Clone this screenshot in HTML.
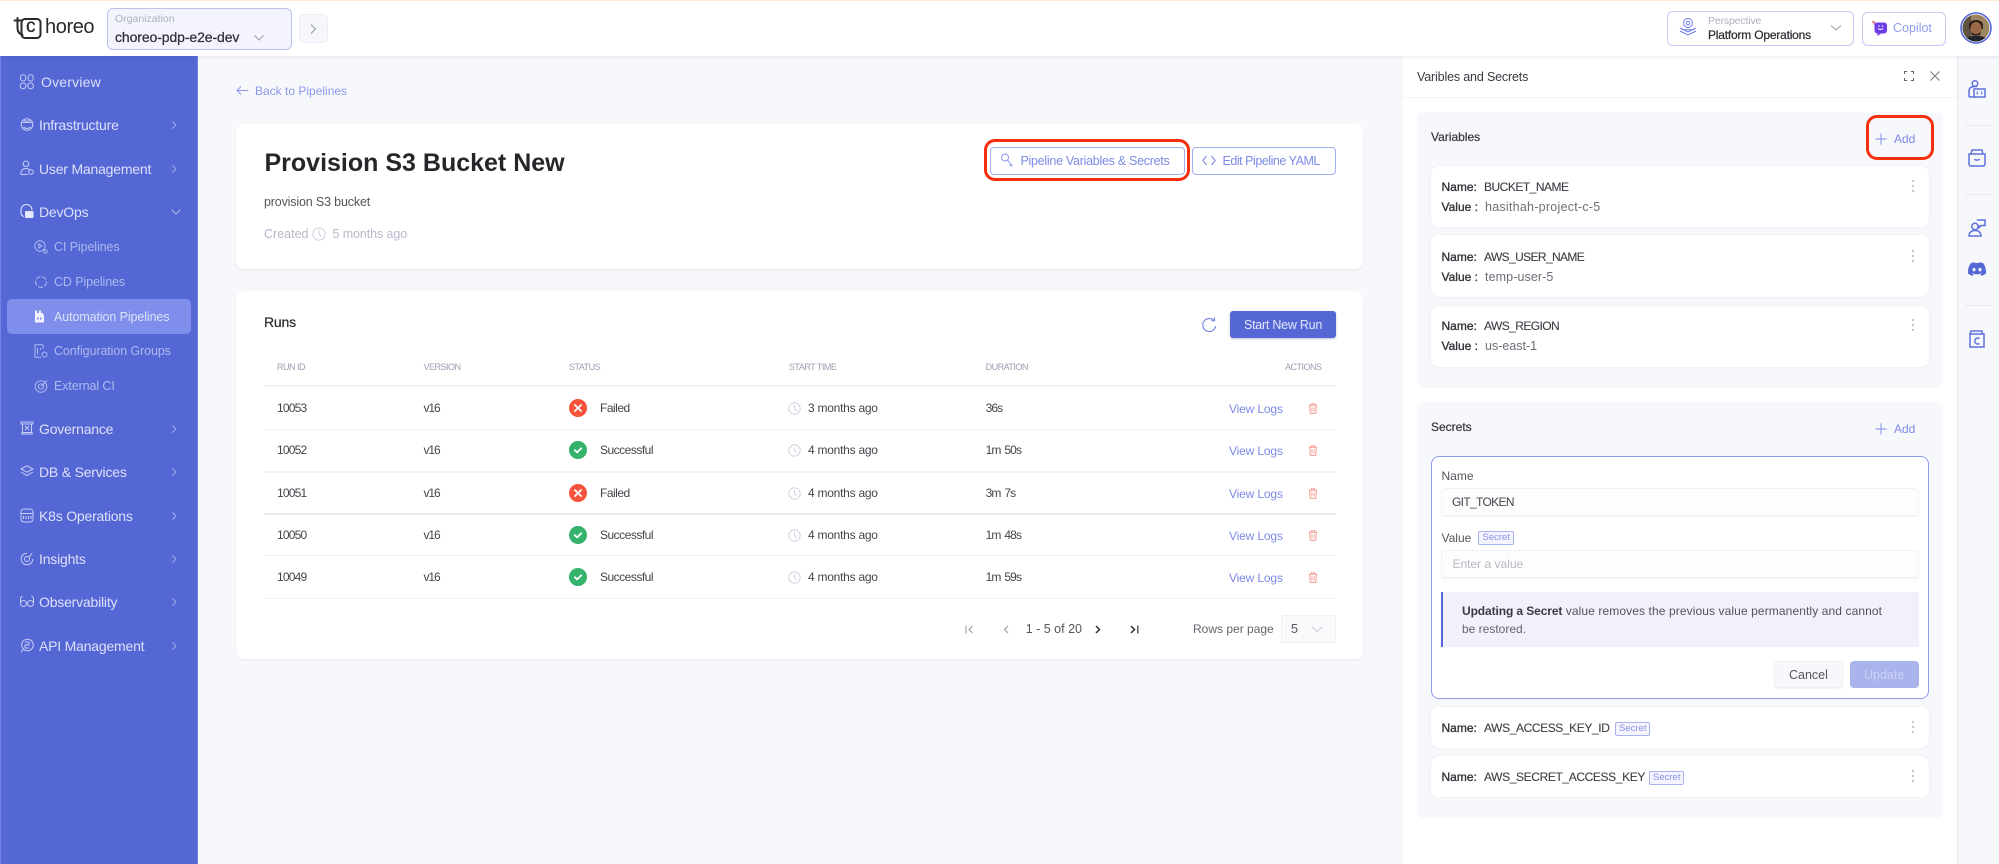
<!DOCTYPE html>
<html lang="en"><head><meta charset="utf-8"><title>Choreo - Provision S3 Bucket New</title>
<style>
html,body{margin:0;padding:0;width:1999px;height:864px;overflow:hidden;background:#F7F8FC}
body{font-family:"Liberation Sans",sans-serif;color:#3c3c44}
#app{position:relative;width:1999px;height:864px;overflow:hidden;filter:blur(.35px)}
.t{position:absolute;white-space:nowrap;line-height:20px;font-size:12px;color:#44444c}
.b{position:absolute;box-sizing:border-box}
svg.i{position:absolute;overflow:visible;fill:none;stroke:currentColor}
.m{-webkit-text-stroke:.25px currentColor}
.nav{font-size:14px;color:#DCE0F8;letter-spacing:-.2px;left:39px}
.sub{font-size:12.5px;color:#AEB8EE;letter-spacing:-.1px;left:54px}
.th{font-size:9px;color:#9B9EB2;letter-spacing:-.5px}
.id{left:277px;letter-spacing:-.8px}
.ver{left:423.5px;letter-spacing:-1.1px}
.st{left:600px;letter-spacing:-.5px}
.tm{left:808px;letter-spacing:-.25px}
.du{left:985.6px;letter-spacing:-.9px;word-spacing:1.5px}
.vl{left:1229px;letter-spacing:-.15px;color:#7C8AE6}
.card{background:#fff;border-radius:8px;box-shadow:0 1px 2px rgba(30,40,90,.07)}
.vc{background:#fff;border-radius:8px;left:1431px;width:498px;box-shadow:0 0 2px rgba(30,40,90,.07)}
.nm{left:1441.5px;color:#33333a;-webkit-text-stroke:.35px currentColor}
.nv{left:1484px;color:#3e3e46;-webkit-text-stroke:.12px currentColor}
.val{left:1485px;font-size:12.5px;color:#6e6e78}
.ln{position:absolute;left:264px;width:1072px;height:1px;background:#F0F1F5}
.chip{border:1px solid #A9B3F0;background:#F3F4FD;border-radius:2px;height:13.5px}
.chipt{font-size:9.5px;color:#8894E8}
.red{border:3px solid #F6300F;border-radius:11px}
</style></head><body>
<svg width="0" height="0" style="position:absolute">
<defs>
<symbol id="clock" viewBox="0 0 16 16"><circle cx="8" cy="8" r="7" fill="none" stroke="#C7C9D8" stroke-width="1"/><path d="M8 3.5V8l2.5 3" fill="none" stroke="#C7C9D8" stroke-width="1"/></symbol>
<symbol id="trash" viewBox="0 0 12 14"><path d="M1 3h10M4 3V1.3h4V3M2 3l.6 9.8h6.8L10 3M4.7 5.5v5M7.3 5.5v5" fill="none" stroke="#F28B80" stroke-width="1"/></symbol>
<symbol id="fail" viewBox="0 0 18 18"><circle cx="9" cy="9" r="9" fill="#F6533C"/><path d="M6 6l6 6M12 6l-6 6" stroke="#fff" stroke-width="1.8" stroke-linecap="round"/></symbol>
<symbol id="ok" viewBox="0 0 18 18"><circle cx="9" cy="9" r="9" fill="#35B26C"/><path d="M5.8 9.2l2.3 2.2 4.2-4.2" fill="none" stroke="#fff" stroke-width="1.8" stroke-linecap="round" stroke-linejoin="round"/></symbol>
<symbol id="cr" viewBox="0 0 10 12"><path d="M3 1.5L7.5 6 3 10.5" fill="none" stroke="#A3AEEC" stroke-width="1.2"/></symbol>
<symbol id="dots" viewBox="0 0 4 14"><circle cx="2" cy="2" r=".9" fill="#9c9ca6"/><circle cx="2" cy="7" r=".9" fill="#9c9ca6"/><circle cx="2" cy="12" r=".9" fill="#9c9ca6"/></symbol>
<symbol id="plus" viewBox="0 0 14 14"><path d="M7 .5v13M.5 7h13" fill="none" stroke="#7C8AE6" stroke-width="1.1"/></symbol>
</defs></svg>
<div id="app">

<!-- header -->
<div class="b" style="left:0;top:0;width:1999px;height:56px;background:#fff;box-shadow:0 1px 4px rgba(30,40,90,.1);z-index:3">
  <div class="b" style="left:0;top:0;width:1999px;height:1px;background:#FCE9D6"></div>
  <svg class="i" style="left:10px;top:14px;color:#2a2a2e" width="36" height="28" viewBox="0 0 36 28"><rect x="11.500" y="5" width="19" height="19" rx="3.500" stroke-width="2"/><path d="M4.500 6.500h7M7.500 4v10c0 4 2 6 5 7" stroke-width="2" stroke-linecap="round"/></svg>
  <div class="t" style="left:26px;top:17px;font-size:19px;color:#2a2a2e;-webkit-text-stroke:.3px currentColor">c</div>
  <div class="t" style="left:45px;top:16.500px;font-size:20px;letter-spacing:-.4px;color:#2a2a2e">horeo</div>
  <div class="b" style="left:107px;top:8px;width:185px;height:42px;background:#F3F4FC;border:1px solid #B9C1F0;border-radius:6px"></div>
  <div class="t" style="left:115px;top:9px;font-size:10.500px;color:#AEB0BE">Organization</div>
  <div class="t m" style="left:115px;top:27px;font-size:14px;letter-spacing:-.1px;color:#2e2e34">choreo-pdp-e2e-dev</div>
  <svg class="i" style="left:253px;top:34px;color:#9a9ca8" width="12" height="8" viewBox="0 0 12 8"><path d="M1.500 1.500L6 6l4.500-4.500"/></svg>
  <div class="b" style="left:299px;top:14px;width:29px;height:29px;background:#F6F7FC;border:1px solid #ECEEF6;border-radius:5px"></div>
  <svg class="i" style="left:309px;top:23px;color:#9a9ca8" width="9" height="12" viewBox="0 0 9 12"><path d="M2 1.500L6.500 6 2 10.500" stroke-width="1.100"/></svg>

  <div class="b" style="left:1667px;top:11px;width:187px;height:35px;background:#fff;border:1px solid #C3CAF4;border-radius:6px"></div>
  <svg class="i" style="left:1679px;top:17px;color:#6D7CE3" width="18" height="20" viewBox="0 0 18 20"><circle cx="9" cy="6" r="4.500"/><circle cx="9" cy="6" r="1.800"/><path d="M1 11l3 1.800h10l3-1.800M1 14l8 4 8-4M1 11l8 4 8-4"/></svg>
  <div class="t" style="left:1708px;top:11px;font-size:10.500px;letter-spacing:-.15px;color:#B0B2C0">Perspective</div>
  <div class="t m" style="left:1708px;top:24.500px;letter-spacing:-.2px;color:#2e2e34">Platform Operations</div>
  <svg class="i" style="left:1830px;top:24px;color:#9a9ca8" width="12" height="8" viewBox="0 0 12 8"><path d="M1 1.500L6 6l5-4.500"/></svg>
  <div class="b" style="left:1862px;top:12px;width:84px;height:34px;background:#fff;border:1px solid #C3CAF4;border-radius:6px"></div>
  <svg class="i" style="left:1872px;top:21px;stroke:none" width="15" height="15" viewBox="0 0 15 15"><path d="M5 1.500h7a3 3 0 013 3v5a3 3 0 01-3 3H9L5.500 15v-2.500A3 3 0 012.500 9.500V4a2.500 2.500 0 012.500-2.500z" fill="#6B3CE8"/><path d="M0 .8h2.200v2.700" stroke="#E0406E" stroke-width="1.200" fill="none"/><path d="M6 7.500c1.200 1.300 3.500 1.300 5 0" stroke="#fff" stroke-width="1.100" fill="none"/><circle cx="7" cy="5" r=".8" fill="#fff"/><circle cx="10.500" cy="5" r=".8" fill="#fff"/></svg>
  <div class="t" style="left:1893px;top:18px;font-size:12.500px;color:#8F9CEC">Copilot</div>
  <svg class="i" style="left:1960px;top:12px;stroke:none" width="32" height="32" viewBox="0 0 32 32"><defs><clipPath id="av"><circle cx="16" cy="16" r="13.500"/></clipPath></defs><circle cx="16" cy="16" r="15" fill="#fff" stroke="#5567D5" stroke-width="1.600"/><g clip-path="url(#av)"><rect width="32" height="32" fill="#9C8660"/><rect x="0" y="0" width="11" height="32" fill="#5E5240"/><path d="M9 14c-1-8 15-8 14 0v3H9z" fill="#2E2018"/><ellipse cx="16" cy="16.500" rx="5.500" ry="6.500" fill="#9C6A48"/><path d="M11 19c2 4 8 4 10 0l-1 4.500h-8z" fill="#2E2018"/><path d="M3 32c1-7 6-8 13-8s12 1 13 8z" fill="#20222C"/></g></svg>
</div>

<!-- sidebar -->
<div class="b" style="left:0;top:56px;width:198px;height:808px;background:#5567D5;border-right:1px solid #7484E4;border-left:1px solid #7484E4"></div>
<div class="b" style="left:7px;top:299px;width:184px;height:35px;background:#7E8EEA;border-radius:5px"></div>

<svg class="i" style="left:20px;top:74px;color:#C6CDF5" width="14" height="16" viewBox="0 0 14 16"><rect x=".5" y=".8" width="5.200" height="6.200" rx="2.400"/><rect x="8" y=".8" width="5.200" height="6.200" rx="2.400"/><circle cx="3.100" cy="11.800" r="2.900"/><circle cx="10.600" cy="11.800" r="2.900"/></svg>
<div class="t nav" style="left:41px;top:72px;letter-spacing:.2px">Overview</div>

<svg class="i" style="left:20px;top:117px;color:#C6CDF5" width="14" height="15" viewBox="0 0 14 15"><circle cx="7" cy="7.500" r="5.800"/><path d="M1 5.500h12M3 2.800c3 2 5 2 8 0M3.500 10c2 2 5 2 7 0"/></svg>
<div class="t nav" style="top:115px">Infrastructure</div>
<svg class="i" style="left:170px;top:120px" width="8" height="10"><use href="#cr"/></svg>

<svg class="i" style="left:20px;top:160px;color:#C6CDF5" width="14" height="16" viewBox="0 0 14 16"><circle cx="6" cy="3.800" r="2.800"/><path d="M.8 14.500c0-4 2-6 5.200-6 1.600 0 3 .5 4 1.500M.8 14.500h7"/><circle cx="11" cy="12" r="2.300"/></svg>
<div class="t nav" style="top:158.500px">User Management</div>
<svg class="i" style="left:170px;top:163.500px" width="8" height="10"><use href="#cr"/></svg>

<svg class="i" style="left:20px;top:204px;color:#E6E9FB" width="14" height="15" viewBox="0 0 14 15"><path d="M1 9V6a5.500 5.500 0 0111 0"/><rect x="5" y="7" width="8.500" height="7" rx="1" fill="#E6E9FB" stroke="none"/><path d="M1 9c0 2 1 3 3 3.500"/></svg>
<div class="t nav" style="top:202px">DevOps</div>
<svg class="i" style="left:170px;top:208px;color:#A3AEEC" width="12" height="8" viewBox="0 0 12 8"><path d="M1.500 1.500L6 6l4.500-4.500" stroke-width="1.200"/></svg>

<svg class="i" style="left:34px;top:240px;color:#AEB8EE" width="14" height="14" viewBox="0 0 14 14"><circle cx="6" cy="6" r="5.200"/><path d="M4.800 3.800l3 2.200-3 2.200z"/><circle cx="11.500" cy="11.500" r="1.700"/></svg>
<div class="t sub" style="top:237px">CI Pipelines</div>
<svg class="i" style="left:34px;top:275px;color:#AEB8EE" width="14" height="14" viewBox="0 0 14 14"><circle cx="7" cy="7" r="5.400" stroke-dasharray="5 1.600"/></svg>
<div class="t sub" style="top:272px">CD Pipelines</div>
<svg class="i" style="left:34px;top:309px;stroke:none;color:#F2F4FD" width="14" height="15" viewBox="0 0 14 15"><path d="M1 1.500h2v2.500h2V1.500h2v2.500h2l1 3v6.500H1z" fill="#F2F4FD"/><rect x="3" y="8.500" width="1.600" height="2" fill="#7E8EEA"/><rect x="6" y="8.500" width="1.600" height="2" fill="#7E8EEA"/></svg>
<div class="t sub" style="top:306.500px;color:#DDE2FA">Automation Pipelines</div>
<svg class="i" style="left:34px;top:344px;color:#AEB8EE" width="14" height="14" viewBox="0 0 14 14"><path d="M9 .8H1v12.400h6M9 .8v4M3.500 4v6M6.500 4v2"/><circle cx="10.500" cy="10.500" r="2.500"/></svg>
<div class="t sub" style="top:341px">Configuration Groups</div>
<svg class="i" style="left:34px;top:379px;color:#AEB8EE" width="14" height="14" viewBox="0 0 14 14"><circle cx="7" cy="7.500" r="5.800"/><circle cx="7" cy="7.500" r="2.600"/><path d="M7 7.500L13 1.500"/></svg>
<div class="t sub" style="top:376px">External CI</div>

<svg class="i" style="left:20px;top:421px;color:#C6CDF5" width="14" height="14" viewBox="0 0 14 14"><path d="M1 1h12v2H1zM1 13h12M2 13v-1.500h10V13M2.500 3v8.500M11.500 3v8.500M5 5l4 4M9 5L5 9"/></svg>
<div class="t nav" style="top:419px">Governance</div>
<svg class="i" style="left:170px;top:424px" width="8" height="10"><use href="#cr"/></svg>

<svg class="i" style="left:20px;top:465px;color:#C6CDF5" width="14" height="13" viewBox="0 0 14 13"><path d="M7 .8l6 3.200-6 3.200L1 4zM1 7l6 3.500L13 7"/></svg>
<div class="t nav" style="top:462px">DB &amp; Services</div>
<svg class="i" style="left:170px;top:467px" width="8" height="10"><use href="#cr"/></svg>

<svg class="i" style="left:20px;top:508px;color:#C6CDF5" width="14" height="15" viewBox="0 0 14 15"><rect x="1" y="1" width="12" height="13" rx="3"/><path d="M1 5.500h12M3.500 8v3M6 8v3M8.500 8v3M11 8v3"/></svg>
<div class="t nav" style="top:506px">K8s Operations</div>
<svg class="i" style="left:170px;top:511px" width="8" height="10"><use href="#cr"/></svg>

<svg class="i" style="left:20px;top:552px;color:#C6CDF5" width="14" height="14" viewBox="0 0 14 14"><path d="M12.800 7A5.800 5.800 0 117 1.200"/><circle cx="7" cy="7" r="2.500"/><path d="M9 5l3-3.500"/></svg>
<div class="t nav" style="top:549px">Insights</div>
<svg class="i" style="left:170px;top:554px" width="8" height="10"><use href="#cr"/></svg>

<svg class="i" style="left:20px;top:595px;color:#C6CDF5" width="14" height="13" viewBox="0 0 14 13"><circle cx="3.500" cy="8.500" r="3"/><circle cx="10.500" cy="8.500" r="3"/><path d="M.5 8V3l2-2M13.500 8V3l-2-2M6.500 8h1"/></svg>
<div class="t nav" style="top:592px">Observability</div>
<svg class="i" style="left:170px;top:597px" width="8" height="10"><use href="#cr"/></svg>

<svg class="i" style="left:20px;top:638px;color:#C6CDF5" width="14" height="15" viewBox="0 0 14 15"><circle cx="7.500" cy="7" r="5.800"/><path d="M1 14l2.500-3M5 4h4v3H5v3h4"/></svg>
<div class="t nav" style="top:636px">API Management</div>
<svg class="i" style="left:170px;top:641px" width="8" height="10"><use href="#cr"/></svg>

<!-- main -->
<svg class="i" style="left:236px;top:85px;color:#8B98EA" width="13" height="11" viewBox="0 0 13 11"><path d="M12.500 5.500H1M5 1.500l-4 4 4 4"/></svg>
<div class="t" style="left:255px;top:80.500px;color:#8B98EA">Back to Pipelines</div>

<div class="b card" style="left:236px;top:124px;width:1127px;height:145px"></div>
<div class="t" style="left:264.500px;top:153px;font-size:25px;font-weight:bold;color:#26262A">Provision S3 Bucket New</div>
<div class="t" style="left:264px;top:192px;font-size:12.500px;letter-spacing:-.16px;color:#55555c">provision S3 bucket</div>
<div class="t" style="left:264px;top:223.500px;font-size:12.500px;color:#B6B9CA">Created</div>
<svg class="i" style="left:311.500px;top:226.500px;stroke:none" width="14" height="14"><use href="#clock"/></svg>
<div class="t" style="left:332.500px;top:223.500px;font-size:12.500px;letter-spacing:-.1px;color:#B6B9CA">5 months ago</div>

<div class="b" style="left:990px;top:147px;width:195px;height:28px;background:#fff;border:1px solid #A3AEF0;border-radius:4px"></div>
<svg class="i" style="left:1000px;top:153px;color:#8B98EA" width="14" height="16" viewBox="0 0 14 16"><circle cx="5" cy="4.500" r="3.500"/><path d="M7.500 7l5 6.500M9.500 13l2.500-2"/></svg>
<div class="t" style="left:1020.500px;top:151px;font-size:12.500px;letter-spacing:-.28px;color:#7C8AE6">Pipeline Variables &amp; Secrets</div>
<div class="b" style="left:1192px;top:147px;width:144px;height:28px;background:#fff;border:1px solid #A3AEF0;border-radius:4px"></div>
<svg class="i" style="left:1202px;top:155px;color:#7C8AE6" width="14" height="11" viewBox="0 0 14 11"><path d="M4.500 1L.8 5.500l3.700 4.500M9.500 1l3.700 4.500-3.700 4.500" stroke-width="1.100"/></svg>
<div class="t" style="left:1222.500px;top:151px;font-size:12.500px;letter-spacing:-.47px;color:#7C8AE6">Edit Pipeline YAML</div>
<div class="b red" style="left:983.500px;top:138.500px;width:206.500px;height:42.500px"></div>

<div class="b card" style="left:236px;top:291px;width:1127px;height:368px"></div>
<div class="t m" style="left:264px;top:312px;font-size:14px;letter-spacing:-.2px;color:#2e2e34">Runs</div>
<svg class="i" style="left:1202px;top:317px;color:#7C8AE6" width="15" height="16" viewBox="0 0 15 16"><path d="M12 3.500A6.500 6.500 0 1013.700 9M12.500.5v3.300H9.200" stroke-width="1.200"/></svg>
<div class="b" style="left:1230px;top:311px;width:106px;height:27px;background:#5567D5;border-radius:3px;box-shadow:0 1px 2px rgba(40,50,120,.3)"></div>
<div class="t" style="left:1244px;top:314.500px;font-size:12.500px;letter-spacing:-.25px;color:#E4E7FB">Start New Run</div>

<div class="t th" style="left:277px;top:357px">RUN ID</div>
<div class="t th" style="left:423.500px;top:357px">VERSION</div>
<div class="t th" style="left:569px;top:357px">STATUS</div>
<div class="t th" style="left:789px;top:357px">START TIME</div>
<div class="t th" style="left:985.600px;top:357px">DURATION</div>
<div class="t th" style="left:1285px;top:357px">ACTIONS</div>
<div class="ln" style="top:385px;height:2px"></div>
<div class="ln" style="top:429px"></div>
<div class="ln" style="top:471px;height:2px"></div>
<div class="ln" style="top:513px;height:2px;background:#E8E9EF"></div>
<div class="ln" style="top:555px"></div>
<div class="ln" style="top:598px"></div>

<div class="t id" style="top:398px">10053</div><div class="t ver" style="top:398px">v16</div>
<svg class="i" style="left:569px;top:399px;stroke:none" width="18" height="18"><use href="#fail"/></svg><div class="t st" style="top:398px">Failed</div>
<svg class="i" style="left:788px;top:402px;stroke:none" width="13" height="13"><use href="#clock"/></svg><div class="t tm" style="top:398px">3 months ago</div>
<div class="t du" style="top:398px">36s</div><div class="t vl" style="top:399px">View Logs</div>
<svg class="i" style="left:1308px;top:402px;stroke:none" width="10" height="13"><use href="#trash"/></svg>

<div class="t id" style="top:440px">10052</div><div class="t ver" style="top:440px">v16</div>
<svg class="i" style="left:569px;top:441px;stroke:none" width="18" height="18"><use href="#ok"/></svg><div class="t st" style="top:440px">Successful</div>
<svg class="i" style="left:788px;top:444px;stroke:none" width="13" height="13"><use href="#clock"/></svg><div class="t tm" style="top:440px">4 months ago</div>
<div class="t du" style="top:440px">1m 50s</div><div class="t vl" style="top:441px">View Logs</div>
<svg class="i" style="left:1308px;top:444px;stroke:none" width="10" height="13"><use href="#trash"/></svg>

<div class="t id" style="top:482.500px">10051</div><div class="t ver" style="top:482.500px">v16</div>
<svg class="i" style="left:569px;top:483.500px;stroke:none" width="18" height="18"><use href="#fail"/></svg><div class="t st" style="top:482.500px">Failed</div>
<svg class="i" style="left:788px;top:486.500px;stroke:none" width="13" height="13"><use href="#clock"/></svg><div class="t tm" style="top:482.500px">4 months ago</div>
<div class="t du" style="top:482.500px">3m 7s</div><div class="t vl" style="top:483.500px">View Logs</div>
<svg class="i" style="left:1308px;top:486.500px;stroke:none" width="10" height="13"><use href="#trash"/></svg>

<div class="t id" style="top:525px">10050</div><div class="t ver" style="top:525px">v16</div>
<svg class="i" style="left:569px;top:526px;stroke:none" width="18" height="18"><use href="#ok"/></svg><div class="t st" style="top:525px">Successful</div>
<svg class="i" style="left:788px;top:529px;stroke:none" width="13" height="13"><use href="#clock"/></svg><div class="t tm" style="top:525px">4 months ago</div>
<div class="t du" style="top:525px">1m 48s</div><div class="t vl" style="top:526px">View Logs</div>
<svg class="i" style="left:1308px;top:529px;stroke:none" width="10" height="13"><use href="#trash"/></svg>

<div class="t id" style="top:567px">10049</div><div class="t ver" style="top:567px">v16</div>
<svg class="i" style="left:569px;top:568px;stroke:none" width="18" height="18"><use href="#ok"/></svg><div class="t st" style="top:567px">Successful</div>
<svg class="i" style="left:788px;top:571px;stroke:none" width="13" height="13"><use href="#clock"/></svg><div class="t tm" style="top:567px">4 months ago</div>
<div class="t du" style="top:567px">1m 59s</div><div class="t vl" style="top:568px">View Logs</div>
<svg class="i" style="left:1308px;top:571px;stroke:none" width="10" height="13"><use href="#trash"/></svg>

<svg class="i" style="left:965px;top:625px;color:#9a9ca8" width="9" height="9" viewBox="0 0 9 9"><path d="M1 .5v8M7.500 1L4 4.500 7.500 8" stroke-width="1.100"/></svg>
<svg class="i" style="left:1003px;top:625px;color:#9a9ca8" width="6" height="9" viewBox="0 0 6 9"><path d="M5 1L1.500 4.500 5 8" stroke-width="1.100"/></svg>
<div class="t" style="left:1025.700px;top:619px;font-size:12.500px;color:#55555c">1 - 5 of 20</div>
<svg class="i" style="left:1095px;top:625px;color:#333" width="6" height="9" viewBox="0 0 6 9"><path d="M1 1l3.500 3.500L1 8" stroke-width="1.500"/></svg>
<svg class="i" style="left:1130px;top:625px;color:#333" width="9" height="9" viewBox="0 0 9 9"><path d="M1 1l3.500 3.500L1 8" stroke-width="1.500"/><path d="M7.800 .5v8" stroke-width="1.200"/></svg>
<div class="t" style="left:1193px;top:619px;color:#66666e">Rows per page</div>
<div class="b" style="left:1281px;top:615px;width:55px;height:28px;background:#FAFAFC;border:1px solid #EFF0F4;border-radius:3px"></div>
<div class="t" style="left:1291px;top:619px;font-size:12.500px;color:#55555c">5</div>
<svg class="i" style="left:1311px;top:626px;color:#C4C6D2" width="12" height="7" viewBox="0 0 12 7"><path d="M1 1l5 4.500L11 1"/></svg>

<!-- right panel -->
<div class="b" style="left:1403px;top:56px;width:555px;height:808px;background:#fff;border-right:1px solid #E6E8F0"></div>
<div class="b" style="left:1958px;top:56px;width:41px;height:808px;background:#F7F8FC"></div>
<div class="b" style="left:1403px;top:96.500px;width:554px;height:1px;background:#F1F2F6"></div>
<div class="t" style="left:1417px;top:67px;font-size:12.500px;letter-spacing:-.16px;color:#3a3a42">Varibles and Secrets</div>
<svg class="i" style="left:1904px;top:71px;color:#666" width="10" height="10" viewBox="0 0 10 10"><path d="M.5 3V.5H3M7 .5h2.500V3M.5 7v2.500H3M7 9.500h2.500V7"/></svg>
<svg class="i" style="left:1930px;top:71px;color:#777" width="10" height="10" viewBox="0 0 10 10"><path d="M.5.5l9 9M9.500.5l-9 9"/></svg>

<div class="b" style="left:1417px;top:112px;width:526px;height:276px;background:#F7F8FC;border-radius:7px"></div>
<div class="t m" style="left:1431px;top:127px;color:#3a3a42">Variables</div>
<svg class="i" style="left:1875px;top:133px;stroke:none" width="12" height="12"><use href="#plus"/></svg>
<div class="t" style="left:1894px;top:129px;color:#7C8AE6">Add</div>
<div class="b red" style="left:1865.500px;top:114.500px;width:68px;height:45.500px"></div>

<div class="b vc" style="top:166px;height:61px"></div>
<div class="t nm" style="top:177px">Name:</div><div class="t nv" style="top:177px;letter-spacing:-.5px">BUCKET_NAME</div>
<div class="t nm" style="top:197px">Value :</div><div class="t val" style="top:197px;letter-spacing:.25px">hasithah-project-c-5</div>
<svg class="i" style="left:1911px;top:179px;stroke:none" width="4" height="14"><use href="#dots"/></svg>

<div class="b vc" style="top:235px;height:62px"></div>
<div class="t nm" style="top:246.500px">Name:</div><div class="t nv" style="top:246.500px;letter-spacing:-.62px">AWS_USER_NAME</div>
<div class="t nm" style="top:266.500px">Value :</div><div class="t val" style="top:266.500px;letter-spacing:.1px">temp-user-5</div>
<svg class="i" style="left:1911px;top:248.500px;stroke:none" width="4" height="14"><use href="#dots"/></svg>

<div class="b vc" style="top:306px;height:61px"></div>
<div class="t nm" style="top:316px">Name:</div><div class="t nv" style="top:316px;letter-spacing:-.58px">AWS_REGION</div>
<div class="t nm" style="top:336px">Value :</div><div class="t val" style="top:336px">us-east-1</div>
<svg class="i" style="left:1911px;top:318px;stroke:none" width="4" height="14"><use href="#dots"/></svg>

<div class="b" style="left:1417px;top:402px;width:526px;height:416px;background:#F7F8FC;border-radius:7px"></div>
<div class="t m" style="left:1431px;top:417px;color:#3a3a42">Secrets</div>
<svg class="i" style="left:1875px;top:423px;stroke:none" width="12" height="12"><use href="#plus"/></svg>
<div class="t" style="left:1894px;top:419px;color:#7C8AE6">Add</div>

<div class="b" style="left:1431px;top:456px;width:498px;height:243px;background:#fff;border:1px solid #8E9BE8;border-radius:8px"></div>
<div class="t" style="left:1441.500px;top:465.500px;color:#55555c">Name</div>
<div class="b" style="left:1441px;top:488px;width:478px;height:27.500px;background:#FDFDFE;border:1px solid #F0F1F5;border-radius:4px;box-shadow:0 1px 1px rgba(30,40,90,.05)"></div>
<div class="t" style="left:1452px;top:492px;letter-spacing:-.66px;color:#44444c">GIT_TOKEN</div>
<div class="t" style="left:1441.500px;top:528px;color:#55555c">Value</div>
<div class="b chip" style="left:1478px;top:531px;width:36px"></div>
<div class="t chipt" style="left:1482.500px;top:527.500px">Secret</div>
<div class="b" style="left:1441px;top:550px;width:478px;height:27.500px;background:#FDFDFE;border:1px solid #F0F1F5;border-radius:4px;box-shadow:0 1px 1px rgba(30,40,90,.05)"></div>
<div class="t" style="left:1452.500px;top:554px;color:#B6B8C2">Enter a value</div>
<div class="b" style="left:1441px;top:591.500px;width:478px;height:55.500px;background:#F0F1FA;border-left:2px solid #5567D5"></div>
<div class="t" style="left:1462px;top:601px;color:#55555c;letter-spacing:.1px"><b style="color:#3a3a42;letter-spacing:-.1px">Updating a Secret</b> value removes the previous value permanently and cannot</div>
<div class="t" style="left:1462px;top:618.500px;color:#66666e">be restored.</div>
<div class="b" style="left:1774px;top:661px;width:69px;height:27px;background:#F7F8FB;border:1px solid #F0F1F5;border-radius:4px;box-shadow:0 1px 1px rgba(30,40,90,.06)"></div>
<div class="t" style="left:1789px;top:664.500px;font-size:12.500px;color:#55555c">Cancel</div>
<div class="b" style="left:1849.500px;top:661px;width:69.500px;height:27px;background:#A9B3EC;border-radius:4px"></div>
<div class="t" style="left:1864px;top:664.500px;font-size:12.500px;color:#CDD3F5">Update</div>

<div class="b vc" style="top:707px;height:41px"></div>
<div class="t nm" style="top:718px">Name:</div><div class="t nv" style="top:718px;letter-spacing:-.4px">AWS_ACCESS_KEY_ID</div>
<div class="b chip" style="left:1615px;top:722px;width:35px"></div>
<div class="t chipt" style="left:1619px;top:718.500px">Secret</div>
<svg class="i" style="left:1911px;top:720px;stroke:none" width="4" height="14"><use href="#dots"/></svg>

<div class="b vc" style="top:756px;height:41px"></div>
<div class="t nm" style="top:767px">Name:</div><div class="t nv" style="top:767px;letter-spacing:-.38px">AWS_SECRET_ACCESS_KEY</div>
<div class="b chip" style="left:1649px;top:771px;width:35px"></div>
<div class="t chipt" style="left:1653px;top:767.500px">Secret</div>
<svg class="i" style="left:1911px;top:769px;stroke:none" width="4" height="14"><use href="#dots"/></svg>

<!-- right rail -->
<svg class="i" style="left:1968px;top:80px;color:#5F70DC" width="18" height="18" viewBox="0 0 18 18"><circle cx="7" cy="3.500" r="2.800" stroke-width="1.500"/><path d="M1 17V11c0-3 2-4.500 6-4.500h2M1 17h16V9H6v8" stroke-width="1.500"/><path d="M10 11.500L8.800 13l1.200 1.500M13 11.500l1.200 1.500-1.200 1.500"/></svg>
<div class="b" style="left:1965px;top:125px;width:27px;height:1px;background:#E8E9F0"></div>
<svg class="i" style="left:1968px;top:149px;color:#5F70DC" width="18" height="18" viewBox="0 0 18 18"><path d="M3 5L4 1h10l1 4M1 5h16v10a2 2 0 01-2 2H3a2 2 0 01-2-2z" stroke-width="1.500"/><path d="M6.500 10c1 1.500 4 1.500 5 0" stroke-width="1.500"/></svg>
<div class="b" style="left:1965px;top:194px;width:27px;height:1px;background:#E8E9F0"></div>
<svg class="i" style="left:1968px;top:219px;color:#5F70DC" width="18" height="18" viewBox="0 0 18 18"><circle cx="7" cy="7.500" r="3.200" stroke-width="1.500"/><path d="M1 17c0-3.500 2.500-5.500 6-5.500s6 2 6 5.500z" stroke-width="1.500"/><path d="M9 1h8v5.500h-3.500L11 8.500V6" stroke-width="1.500"/></svg>
<svg class="i" style="left:1968px;top:260px;stroke:none" width="18" height="18" viewBox="0 0 24 24"><path fill="#5567D5" d="M20.317 4.3698a19.7913 19.7913 0 00-4.8851-1.5152.0741.0741 0 00-.0785.0371c-.211.3753-.4447.8648-.6083 1.2495-1.8447-.2762-3.68-.2762-5.4868 0-.1636-.3933-.4058-.8742-.6177-1.2495a.077.077 0 00-.0785-.037 19.7363 19.7363 0 00-4.8852 1.515.0699.0699 0 00-.0321.0277C.5334 9.0458-.319 13.5799.0992 18.0578a.0824.0824 0 00.0312.0561c2.0528 1.5076 4.0413 2.4228 5.9929 3.0294a.0777.0777 0 00.0842-.0276c.4616-.6304.8731-1.2952 1.226-1.9942a.076.076 0 00-.0416-.1057c-.6528-.2476-1.2743-.5495-1.8722-.8923a.077.077 0 01-.0076-.1277c.1258-.0943.2517-.1923.3718-.2914a.0743.0743 0 01.0776-.0105c3.9278 1.7933 8.18 1.7933 12.0614 0a.0739.0739 0 01.0785.0095c.1202.099.246.1981.3728.2924a.077.077 0 01-.0066.1276 12.2986 12.2986 0 01-1.8732.8914.0766.0766 0 00-.0407.1067c.3604.698.7719 1.3628 1.225 1.9932a.076.076 0 00.0842.0286c1.961-.6067 3.9495-1.5219 6.0023-3.0294a.077.077 0 00.0313-.0552c.5004-5.177-.8382-9.6739-3.5485-13.6604a.061.061 0 00-.0312-.0286zM8.02 15.3312c-1.1825 0-2.1569-1.0857-2.1569-2.419 0-1.3332.9555-2.4189 2.157-2.4189 1.2108 0 2.1757 1.0952 2.1568 2.419 0 1.3332-.9555 2.4189-2.1569 2.4189zm7.9748 0c-1.1825 0-2.1569-1.0857-2.1569-2.419 0-1.3332.9554-2.4189 2.1569-2.4189 1.2108 0 2.1757 1.0952 2.1568 2.419 0 1.3332-.946 2.4189-2.1568 2.4189Z"/></svg>
<div class="b" style="left:1965px;top:305px;width:27px;height:1px;background:#E8E9F0"></div>
<svg class="i" style="left:1969px;top:330px;color:#5F70DC" width="16" height="18" viewBox="0 0 16 18"><path d="M1 4L2 1h11v3M1 4h14v13H1z" stroke-width="1.500"/><path d="M10.500 8.500a3 3 0 100 5" stroke-width="1.500"/></svg>

</div>
</body></html>
